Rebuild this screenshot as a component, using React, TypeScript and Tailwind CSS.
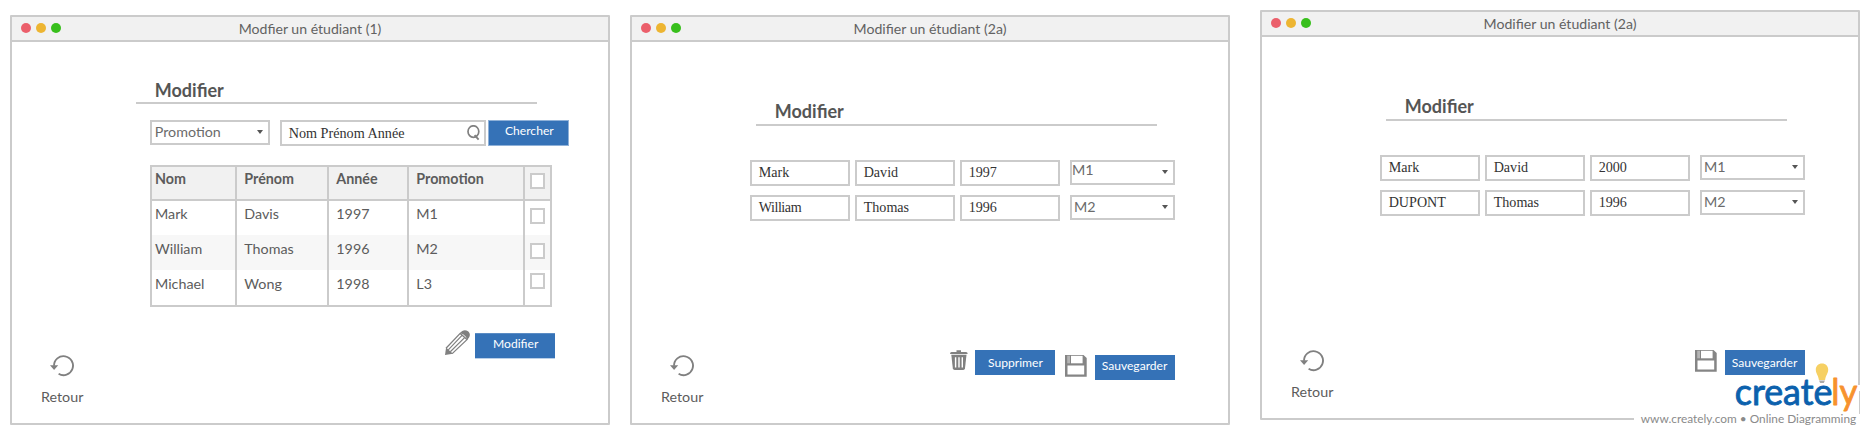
import type { ReactNode } from "react";
import { clsx } from "clsx";

function AppWindow({ title, className, children }: { title: string; className?: string; children: ReactNode }) {
  return (
    <section className={clsx("flex h-[410px] w-[600px] shrink-0 flex-col rounded-[1px] border-2 border-[#cbcbcb] bg-white", className)}>
      <header className="grid h-[25px] shrink-0 grid-cols-[1fr_auto_1fr] border-b-2 border-[#cbcbcb] bg-[#f1f1f1]">
        <div className="flex gap-[5px] pt-[6.3px] pl-[8.7px]">
          <span className="size-2.5 rounded-full bg-[#eb5f6b]" />
          <span className="size-2.5 rounded-full bg-[#edb532]" />
          <span className="size-2.5 rounded-full bg-[#38bf1c]" />
        </div>
        <h1 className="text-[14.1px] leading-[23px] text-[#626262]">{title}</h1>
      </header>
      {children}
    </section>
  );
}

function Heading({ className }: { className: string }) {
  return (
    <h2 className={clsx("ml-[123.5px] w-[401.5px] border-b-2 border-[#cbcbcb] pl-[19.3px] text-[18px] leading-6 font-bold text-[#555]", className)}>
      Modifier
    </h2>
  );
}

function SelectBox({ value, className, textClass = "pt-px pl-[2px]" }: { value: string; className: string; textClass?: string }) {
  return (
    <div className={clsx("flex h-[25px] justify-between border-2 border-[#cbcbcb] bg-white pr-[5px] text-[14.3px] leading-[17px] text-[#6b6b6b]", className)}>
      <span className={textClass}>{value}</span>
      <svg className="mt-[8.3px] h-1 w-1.5" viewBox="0 0 6 4">
        <path d="M0 0H6L3 4Z" fill="#555" />
      </svg>
    </div>
  );
}

function Field({ value }: { value: string }) {
  return (
    <div className="h-[26px] w-[100px] border-2 border-[#cbcbcb] bg-white pt-[3px] pl-[6.7px] font-['Liberation_Serif',serif] text-[14.1px] leading-[15px] text-[#333]">
      <span className={clsx(value === "William" && "tracking-[-0.45px]")}>{value}</span>
    </div>
  );
}

function Button({ label, className }: { label: string; className: string }) {
  return (
    <div role="button" className={clsx("bg-[#3572b7] text-[12.1px] leading-[15px] text-white", className)}>
      {label}
    </div>
  );
}

function Retour({ className }: { className: string }) {
  return (
    <div className={clsx("w-[60px]", className)}>
      <svg className="ml-[10px] block" width="25" height="22" viewBox="0 0 25 22">
        <path d="M8.6 18.8A9.5 9.5 0 1 0 4 10.7" fill="none" stroke="#808080" strokeWidth="1.9" />
        <path d="M0 10.2H8.2L4.1 14.9Z" fill="#808080" />
      </svg>
      <p className="mt-[11px] ml-[1px] text-[14.3px] leading-[17px] text-[#5c5c5c]">Retour</p>
    </div>
  );
}

function Pencil() {
  return (
    <svg width="26" height="26" viewBox="0 0 26 26" className="shrink-0">
      <path d="M1 18.2 15.2 3.4 22 9.6 7.2 23.6" fill="#fff" stroke="#808080" strokeWidth="1.3" />
      <path d="M3.3 19.9 17 5.4M5.3 21.8 19.6 7.6" stroke="#808080" strokeWidth="1.2" />
      <path d="M1.1 17.5 8 23.8 0 25Z" fill="#808080" />
      <path d="M14.8 3.2C17.5-.4 20.6-.5 23 1.3 25.8 3.6 25.4 6.8 22.2 9.8 21.4 6.4 18.4 3.6 14.8 3.2Z" fill="#808080" />
    </svg>
  );
}

function Trash() {
  return (
    <svg width="18" height="20" viewBox="0 0 18 20" className="shrink-0">
      <path d="M6.5 2V.3H11V2H16Q17.7 2.2 17.7 4H0Q0 2.2 1.5 2Z" fill="#808080" />
      <path d="M1.3 4.800H16.500L15 18.300Q14.800 20 13.200 20H4.700Q3 20 2.800 18.300Z" fill="#808080" />
      <path d="M5.600 7.300V17.600M9 7.300V17.600M12.300 7.300V17.600" stroke="#fff" strokeWidth="1.400" />
    </svg>
  );
}

function Floppy() {
  return (
    <svg width="22" height="22" viewBox="0 0 22 22" className="shrink-0">
      <path d="M0 0H18.5L21.7 3V21.8H0Z" fill="#858585" />
      <path d="M2.2.7H5V8.3H2.2Z" fill="#b5b5b5" />
      <path d="M6 .8H17.6V8.3H6Z" fill="#fff" />
      <path d="M2.5 10.500H19.200V19.500H2.500Z" fill="#fff" />
    </svg>
  );
}

function Checkbox({ className }: { className: string }) {
  return <span className={clsx("ml-[5px] block h-4 w-[15px] border-2 border-[#cbcbcb] bg-white", className)} />;
}

const students = [
  { cells: ["Mark", "Davis", "1997", "M1"], row: "h-[34px]", text: "pt-1", box: "mt-[7px]" },
  { cells: ["William", "Thomas", "1996", "M2"], row: "h-[35px] bg-[#f7f7f7]", text: "pt-[5px]", box: "mt-2" },
  { cells: ["Michael", "Wong", "1998", "L3"], row: "h-[35px]", text: "pt-[5px]", box: "mt-[3px]" },
];

function Row({ cells, className, text, box }: { cells: string[]; className: string; text: string; box: string }) {
  return (
    <div className={clsx("grid grid-cols-[85px_92px_80px_116px_25px]", className)}>
      {cells.map((cell, i) => (
        <div key={cell} className={clsx("border-r-2 border-[#cbcbcb]", i === 0 ? "pl-[3px]" : "pl-[7.3px]", text)}>
          {cell}
        </div>
      ))}
      <div>
        <Checkbox className={box} />
      </div>
    </div>
  );
}

function EditGrid({ rows, firstSelect }: { rows: string[][]; firstSelect?: string }) {
  return (
    <div className="mt-[34px] ml-[118px] flex flex-col gap-[9px]">
      {rows.map((row, i) => (
        <div key={i} className="flex gap-[5px]">
          <Field value={row[0]} />
          <Field value={row[1]} />
          <Field value={row[2]} />
          <SelectBox value={row[3]} className="ml-[5px] w-[105px]" textClass={i === 0 && firstSelect ? firstSelect : "pt-px pl-[2px]"} />
        </div>
      ))}
    </div>
  );
}

function Watermark() {
  return (
    <div className="absolute top-[360px] left-[1634px] h-[75px] w-[236px]">
      <svg width="236" height="75" viewBox="0 0 236 75">
        <rect x="0" y="54" width="236" height="16" fill="#fff" />
        <rect x="216" y="25" width="12" height="6" fill="#fff" />
        <rect x="216" y="31" width="9" height="24" fill="#fff" />
        <g fontFamily="Lato, sans-serif" fontSize="37" strokeLinejoin="round" strokeWidth="0.9">
          <text x="100.800" y="44.500" textLength="97.500" lengthAdjust="spacingAndGlyphs" stroke="#0b61ad" fill="#0b61ad">create</text>
          <text x="197.300" y="44.500" textLength="26" lengthAdjust="spacingAndGlyphs" stroke="#f7922d" fill="#f7922d">ly</text>
        </g>
        <path d="M188 3.5C184.200 3.500 181.800 6.200 181.800 9.500 181.800 13.500 184.200 15 184.900 20H191.100C191.800 15 194.200 13.500 194.200 9.500 194.200 6.200 191.800 3.500 188 3.500Z" fill="#f6d063" />
        <path d="M185 20.600H191L189.800 23H186.200Z" fill="#aaa" />
        <text x="6.800" y="62.700" fontFamily="Lato, sans-serif" fontSize="11.850" fill="#8a8a8a">www.creately.com • Online Diagramming</text>
      </svg>
    </div>
  );
}

export default function App() {
  return (
    <main className="relative flex h-[435px] w-[1870px] items-start overflow-hidden bg-white pl-[10px] font-['Lato',sans-serif] whitespace-nowrap">
      <AppWindow title="Modfier un étudiant (1)" className="mt-[15px]">
        <Heading className="mt-9" />
        <div className="mt-4 ml-[138px] flex">
          <SelectBox value="Promotion" className="w-[120px]" textClass="pt-px pl-[2.7px]" />
          <div className="ml-[10px] flex h-[26px] w-[206px] justify-between border-2 border-[#cbcbcb] pr-1 pl-[6.7px]">
            <span className="pt-1 font-['Liberation_Serif',serif] text-[14.2px] leading-[15px] text-[#333]">Nom Prénom Année</span>
            <svg className="mt-[3px]" width="13" height="16" viewBox="0 0 13 16">
              <ellipse cx="6.400" cy="6.600" rx="5.400" ry="5.800" fill="none" stroke="#808080" strokeWidth="1.700" />
              <path d="M7.600 10.200 11.600 14.600" stroke="#808080" strokeWidth="1.900" />
            </svg>
          </div>
          <Button label="Chercher" className="ml-[2px] h-[26px] w-[81px] border border-[#8fb1d8] pt-[2px] pl-[16px]" />
        </div>
        <div className="mt-[19px] ml-[138px] w-[402px] border-2 border-[#cbcbcb] text-[14.3px] leading-[17px] text-[#5c5c5c]">
          <Row cells={["Nom", "Prénom", "Année", "Promotion"]} className="h-[34px] border-b-2 border-[#cbcbcb] bg-[#f1f1f1] font-bold" text="pt-[3px]" box="mt-1.5" />
          {students.map((s) => (
            <Row key={s.cells[0]} cells={s.cells} className={s.row} text={s.text} box={s.box} />
          ))}
        </div>
        <div className="mt-[23px] flex items-start">
          <Retour className="mt-[25px] ml-7" />
          <div className="ml-[345px] flex">
            <Pencil />
            <Button label="Modifier" className="mt-[3px] ml-1 h-[26px] w-20 border-t border-b border-t-[#5b8cc4] border-b-[#b9cfe8] pt-[2px] pl-[18px]" />
          </div>
        </div>
      </AppWindow>

      <AppWindow title="Modifier un étudiant (2a)" className="mt-[15px] ml-5">
        <Heading className="mt-[57px] pb-px" />
        <EditGrid
          firstSelect="-mt-px pl-0"
          rows={[
            ["Mark", "David", "1997", "M1"],
            ["William", "Thomas", "1996", "M2"],
          ]}
        />
        <div className="mt-[129px] flex items-start">
          <Retour className="mt-[5px] ml-7" />
          <div className="ml-[230px] flex items-start">
            <Trash />
            <Button label="Supprimer" className="ml-[7px] h-[25px] w-20 pt-[5px] pl-[13px]" />
            <div className="mt-[5px] ml-[10px] flex">
              <Floppy />
              <Button label="Sauvegarder" className="ml-2 h-[25px] w-20 pt-[3px] pl-[6.7px]" />
            </div>
          </div>
        </div>
      </AppWindow>

      <AppWindow title="Modifier un étudiant (2a)" className="mt-[10px] ml-[30px]">
        <Heading className="mt-[57px] pb-px" />
        <EditGrid
          rows={[
            ["Mark", "David", "2000", "M1"],
            ["DUPONT", "Thomas", "1996", "M2"],
          ]}
        />
        <div className="mt-[134px] flex items-start">
          <Retour className="ml-7" />
          <div className="ml-[345px] flex">
            <Floppy />
            <Button label="Sauvegarder" className="ml-2 h-[25px] w-20 pt-[5px] pl-[6.7px]" />
          </div>
        </div>
      </AppWindow>
      <Watermark />
    </main>
  );
}
